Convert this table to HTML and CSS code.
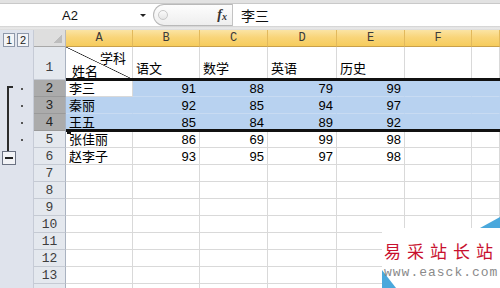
FILE: index.html
```html
<!DOCTYPE html>
<html lang="zh">
<head>
<meta charset="utf-8">
<link rel="stylesheet" href="styles.css">
</head>
<body>
<div class="app">
  <div class="toolstrip"></div>
  <div class="formula-bar">
    <div class="namebox"><span class="name">A2</span><span class="dd"></span></div>
    <div class="fxbox"><span class="knob"></span><span class="fx">f<sub>x</sub></span></div>
    <div class="input">李三</div>
  </div>
  <div class="fb-bottom"></div>
  <div class="sheet">
    <div class="levels"><span class="lv">1</span><span class="lv">2</span></div>
    <div class="corner"><span class="tri"></span></div>
    <div class="ch">A</div><div class="ch">B</div><div class="ch">C</div><div class="ch">D</div><div class="ch">E</div><div class="ch">F</div><div class="ch"></div>

    <div class="pane">
      <div class="bracket-col"><div class="bracket"></div><div class="minus"><span class="bar"></span></div></div>
      <div class="dots"><div class="dot-row"><span class="dot"></span></div><div class="dot-row"><span class="dot"></span></div><div class="dot-row"><span class="dot"></span></div><div class="dot-row"><span class="dot"></span></div></div>
    </div>

    <div class="rh rh1">1</div>
    <div class="c diag"><span class="t1">学科</span><span class="t2">姓名</span></div>
    <div class="c h1">语文</div><div class="c h1">数学</div><div class="c h1">英语</div><div class="c h1">历史</div><div class="c h1"></div><div class="c h1"></div>

    <div class="rh sel">2</div>
    <div class="c active">李三</div><div class="c s num">91</div><div class="c s num">88</div><div class="c s num">79</div><div class="c s num">99</div><div class="c s"></div><div class="c s"></div>

    <div class="rh sel">3</div>
    <div class="c s">秦丽</div><div class="c s num">92</div><div class="c s num">85</div><div class="c s num">94</div><div class="c s num">97</div><div class="c s"></div><div class="c s"></div>

    <div class="rh sel">4</div>
    <div class="c s">王五</div><div class="c s num">85</div><div class="c s num">84</div><div class="c s num">89</div><div class="c s num">92</div><div class="c s"></div><div class="c s"></div>

    <div class="rh">5</div>
    <div class="c">张佳丽</div><div class="c num">86</div><div class="c num">69</div><div class="c num">99</div><div class="c num">98</div><div class="c"></div><div class="c"></div>

    <div class="rh">6</div>
    <div class="c">赵李子</div><div class="c num">93</div><div class="c num">95</div><div class="c num">97</div><div class="c num">98</div><div class="c"></div><div class="c"></div>

    <div class="rh">7</div><div class="c"></div><div class="c"></div><div class="c"></div><div class="c"></div><div class="c"></div><div class="c"></div><div class="c"></div>
    <div class="rh">8</div><div class="c"></div><div class="c"></div><div class="c"></div><div class="c"></div><div class="c"></div><div class="c"></div><div class="c"></div>
    <div class="rh">9</div><div class="c"></div><div class="c"></div><div class="c"></div><div class="c"></div><div class="c"></div><div class="c"></div><div class="c"></div>
    <div class="rh">10</div><div class="c"></div><div class="c"></div><div class="c"></div><div class="c"></div><div class="c"></div><div class="c"></div><div class="c"></div>
    <div class="rh">11</div><div class="c"></div><div class="c"></div><div class="c"></div><div class="c"></div><div class="c"></div><div class="c"></div><div class="c"></div>
    <div class="rh">12</div><div class="c"></div><div class="c"></div><div class="c"></div><div class="c"></div><div class="c"></div><div class="c"></div><div class="c"></div>
    <div class="rh">13</div><div class="c"></div><div class="c"></div><div class="c"></div><div class="c"></div><div class="c"></div><div class="c"></div><div class="c"></div>
    <div class="rh"></div><div class="c"></div><div class="c"></div><div class="c"></div><div class="c"></div><div class="c"></div><div class="c"></div><div class="c"></div>
  </div>

  <div class="selection"><span class="handle"></span></div>

  <div class="watermark">
    <svg class="wm-bg" width="118" height="71" viewBox="0 0 118 71">
      <polygon points="0,11 118,11 118,71 0,71" fill="#ffffff"/>
      <polygon points="98,11 118,0 118,11" fill="#4aa8dc"/>
      <polygon points="0,53 0,71 14,71" fill="#4aa8dc"/>
    </svg>
    <div class="wm-text">
      <div class="wm-cn">易采站长站</div>
      <div class="wm-url">www.easck.com</div>
    </div>
  </div>
</div>
</body>
</html>
```

FILE: styles.css
```css
* { box-sizing: border-box; margin: 0; padding: 0; }
html, body { width: 500px; height: 288px; overflow: hidden; background: #fff; }
body { font-family: "Liberation Sans", "Noto Sans CJK SC", sans-serif; font-size: 13px; color: #000; }
.app { position: relative; width: 500px; height: 288px; overflow: hidden; }

.toolstrip { height: 4px; background: #e2e2e2; border-bottom: 1px solid #c9c9c9; }
.formula-bar { display: flex; height: 22px; background: #fff; }
.fb-bottom { height: 4px; background: linear-gradient(#cfcfcf, #ececec 50%, #dadada); }
.namebox { width: 153px; display: flex; align-items: center; }
.name { flex: 1; text-align: center; font-size: 13px; color: #111; }
.dd { width: 0; height: 0; border-left: 3px solid transparent; border-right: 3px solid transparent; border-top: 3px solid #222; margin-right: 7px; }
.fxbox { width: 79px; height: 22px; display: flex; align-items: center; justify-content: space-between; border: 1px solid #b9b9b9; border-right: none; border-radius: 11px 0 0 11px; background: linear-gradient(#fdfdfd, #eeeeee); padding: 0 5px 0 4px; }
.knob { width: 10px; height: 10px; border-radius: 50%; border: 1px solid #c8c8c8; background: linear-gradient(#fafafa, #e6e6e6); }
.fx { font-family: "Liberation Serif", serif; font-style: italic; font-weight: bold; font-size: 14px; color: #333; }
.fx sub { font-size: 10px; vertical-align: -1px; }
.input { flex: 1; border-left: 1px solid #c3c3c3; padding-left: 8px; font-family: "Noto Sans CJK SC", sans-serif; font-size: 14px; line-height: 22px; color: #111; }

.sheet { display: grid; grid-template-columns: 34px 32px 67px 67px 68px 69px 68px 67px 1fr; grid-template-rows: 17px 33px repeat(13, 17px); }

.levels { background: #dfe3ec; display: flex; gap: 2px; padding: 3px 0 0 3px; border-right: 1px solid #c6cbd6; }
.lv { width: 12px; height: 14px; border: 1px solid #8e98aa; background: #f3f4f7; font-size: 11px; line-height: 12px; text-align: center; color: #222; }
.corner { background: #dedede; border-right: 1px solid #b9b9b9; border-bottom: 1px solid #a8a8a8; display: flex; justify-content: flex-end; align-items: flex-end; padding: 0 3px 3px 0; }
.tri { width: 8px; height: 8px; background: linear-gradient(135deg, transparent 50%, #bdbdbd 50%); }
.ch { background: linear-gradient(#fbe4a4, #f9d57a 45%, #f6cc5c); border-right: 1px solid #e2b95c; border-bottom: 1px solid #c9a04a; text-align: center; font-family: "Liberation Mono", monospace; font-size: 12px; line-height: 16px; color: #3a3a3a; }

.pane { grid-column: 1; grid-row: 2 / -1; background: #dfe3ec; border-right: 1px solid #c6cbd6; display: grid; grid-template-columns: 16px 17px; align-content: start; padding-top: 33px; }
.bracket-col { display: flex; flex-direction: column; }
.bracket { margin: 6px 0 0 7px; width: 6px; height: 65px; border-left: 2px solid #2b2b2b; border-top: 2px solid #2b2b2b; }
.minus { margin-left: 2px; width: 14px; height: 14px; border: 1px solid #6b7282; background: #f2f3f6; display: flex; align-items: center; justify-content: center; }
.bar { width: 8px; height: 2px; background: #222; }
.dots { display: flex; flex-direction: column; }
.dot-row { height: 17px; display: flex; align-items: center; padding: 1px 0 0 5px; }
.dot { width: 2px; height: 2px; background: #555; }

.rh { background: #e4e8ee; border-bottom: 1px solid #c5cad3; border-right: 1px solid #a9b2c0; text-align: center; font-family: "Liberation Mono", monospace; font-size: 13px; line-height: 17px; color: #3d3d3d; }
.rh1 { padding-top: 12px; }
.rh.sel { background: #ababab; color: #222; border-bottom-color: #9a9a9a; }

.c { border-right: 1px solid #d9d9d9; border-bottom: 1px solid #d9d9d9; padding: 1px 3px 0; line-height: 15px; white-space: nowrap; overflow: hidden; }
.num { text-align: right; }
.h1 { padding-top: 14px; }
.s { background: #b8d2f0; border-right-color: #b8d2f0; border-bottom-color: #c8dbf2; }
.active { background: #fff; }
.diag { display: flex; flex-direction: column; padding: 5px 6px 0; line-height: 13px; background: linear-gradient(to top right, transparent calc(50% - 0.7px), #222 50%, transparent calc(50% + 0.7px)); }
.diag .t1 { align-self: flex-end; }
.diag .t2 { align-self: flex-start; }

.selection { position: absolute; left: 66px; top: 78px; width: 434px; height: 54px; border-top: 3px solid #111; border-bottom: 3px solid #111; }
.handle { position: absolute; left: 1px; bottom: -5px; width: 4px; height: 4px; background: #111; }

.watermark { position: absolute; right: 0; bottom: 0; width: 118px; height: 71px; }
.wm-bg { position: absolute; left: 0; top: 0; }
.wm-text { position: relative; padding: 24px 0 0 2px; display: flex; flex-direction: column; }
.wm-cn { font-family: "Noto Sans CJK SC", sans-serif; font-size: 17px; line-height: 20px; letter-spacing: 6px; color: #c8102e; }
.wm-url { margin-top: 5px; font-family: "Liberation Mono", monospace; font-size: 13px; line-height: 14px; letter-spacing: 1px; color: #8a8a8a; }
```
